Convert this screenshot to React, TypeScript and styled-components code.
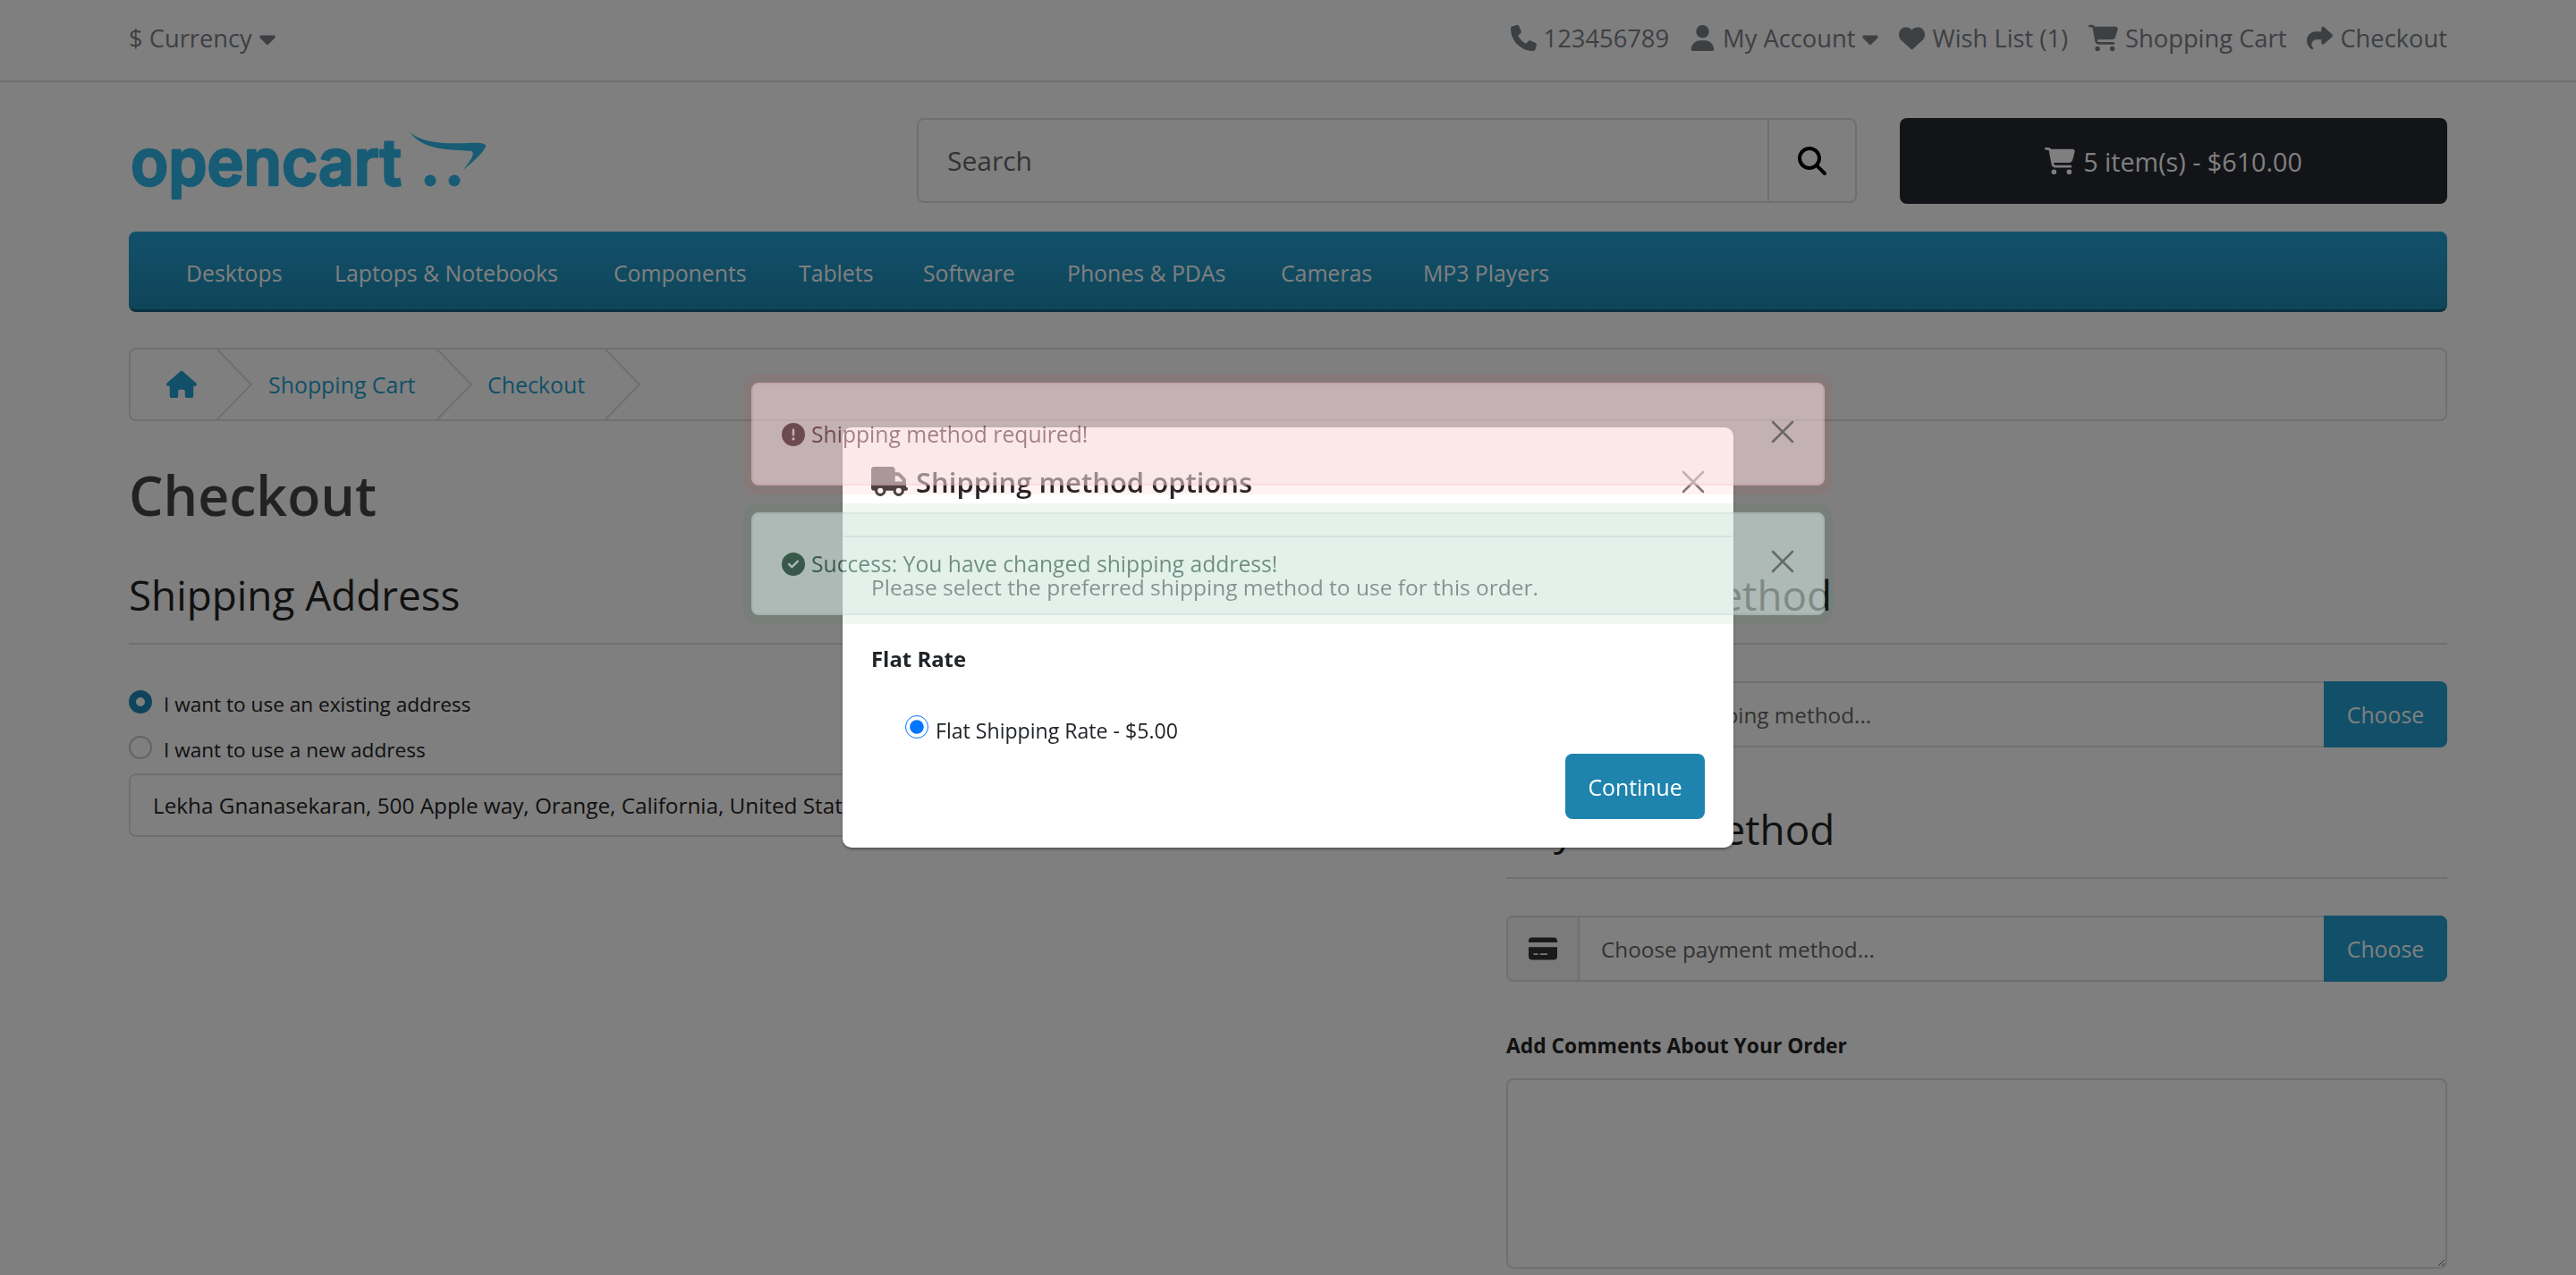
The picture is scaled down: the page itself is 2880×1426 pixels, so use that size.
import React from 'react';
import styled, { createGlobalStyle } from 'styled-components';
import {
  FaCaretDown,
  FaCartShopping,
  FaCircleCheck,
  FaCircleExclamation,
  FaCreditCard,
  FaHeart,
  FaHouse,
  FaMagnifyingGlass,
  FaPhone,
  FaShare,
  FaTruck,
  FaUser,
} from 'react-icons/fa6';

const GlobalStyle = createGlobalStyle`
  html, body {
    margin: 0;
    height: 1426px;
    overflow: hidden;
    background: #fff;
    font-family: "Open Sans", "Noto Sans", sans-serif;
    color: #222;
  }
  * { box-sizing: border-box; }
`;

// page under the backdrop
const TopBar = styled.nav`
  height: 92px;
  padding: 0 144px 5px;
  border-bottom: 2px solid #dedede;
  display: flex;
  align-items: center;
  justify-content: space-between;
  font-size: 27.3px;
  color: #7b8087;
`;

const TopGroup = styled.div`
  display: flex;
  align-items: center;
  gap: 23px;
`;

const TopLink = styled.span`
  display: flex;
  align-items: center;
  gap: 8px;
  white-space: nowrap;
  svg { font-size: 29px; }
  svg.wide { font-size: 33px; }
  svg.caret { font-size: 28px; margin: 0 -5px; }
`;

const Main = styled.div`
  padding: 40px 144px 0;
`;

const HeaderRow = styled.header`
  display: flex;
  align-items: flex-start;
  height: 96px;
`;

const LogoWrap = styled.div`
  flex: 1;
  padding-top: 15px;
  svg { display: block; overflow: visible; }
`;

const SearchBox = styled.div`
  width: 1051px;
  height: 95px;
  margin-right: 48px;
  border: 2px solid #dedede;
  border-radius: 8px;
  display: flex;
  align-items: stretch;
`;

const SearchText = styled.div`
  flex: 1;
  padding-left: 32px;
  display: flex;
  align-items: center;
  font-size: 30px;
  color: #666;
`;

const SearchButton = styled.div`
  width: 98px;
  border-left: 2px solid #dedede;
  display: flex;
  align-items: center;
  justify-content: center;
  font-size: 32px;
  color: #000;
`;

const CartButton = styled.div`
  width: 612px;
  height: 96px;
  border-radius: 8px;
  background: #26282e;
  color: #fff;
  display: flex;
  align-items: center;
  justify-content: center;
  gap: 9px;
  font-size: 28.7px;
  svg { font-size: 34px; }
`;

const MenuBar = styled.div`
  margin-top: 31px;
  height: 90px;
  padding: 4px 0 0 64px;
  border-radius: 8px;
  border-bottom: 3px solid #14607f;
  background: linear-gradient(#24a2d6, #1e8ab2);
  display: flex;
  align-items: center;
  gap: 60px;
  color: #fff;
  font-size: 24.8px;
`;

const MenuItem = styled.span<{ $width: number }>`
  width: ${(p) => p.$width}px;
  white-space: nowrap;
`;

const Breadcrumb = styled.div`
  margin-top: 40px;
  height: 82px;
  border: 2px solid #dedede;
  border-radius: 8px;
  display: flex;
  align-items: stretch;
  overflow: hidden;
  font-size: 24.9px;
  color: #23a1d1;
`;

const Crumb = styled.div<{ $width: number; $pad: number }>`
  position: relative;
  width: ${(p) => p.$width}px;
  padding-left: ${(p) => p.$pad}px;
  display: flex;
  align-items: center;
  white-space: nowrap;
`;

const Chevron = styled.svg`
  position: absolute;
  right: -42px;
  top: -2px;
  width: 42px;
  height: 82px;
`;

const PageTitle = styled.h1`
  margin: 44px 0 0;
  height: 77px;
  line-height: 77px;
  font-size: 60.8px;
  font-weight: 600;
  color: #444;
`;

const Columns = styled.div`
  margin-top: 44px;
  display: grid;
  grid-template-columns: 1492px 1052px;
  gap: 48px;
`;

const SectionTitle = styled.h2`
  margin: 0;
  height: 85px;
  line-height: 58px;
  border-bottom: 2px solid #dedede;
  font-size: 45.8px;
  font-weight: 400;
  color: #222;
`;

const RadioRow = styled.div<{ $first?: boolean }>`
  margin-top: ${(p) => (p.$first ? 48 : 15)}px;
  height: 36px;
  display: flex;
  align-items: center;
  gap: 13px;
  font-size: 22.6px;
  color: #222;
`;

const Dot = styled.span<{ $on?: boolean }>`
  width: 26px;
  height: 26px;
  margin-top: -5px;
  border-radius: 50%;
  border: ${(p) => (p.$on ? '8px solid #1f8ab8' : '2px solid #c4c4c4')};
  background: #fff;
`;

const SelectBox = styled.div`
  margin-top: 9px;
  height: 71px;
  padding-left: 25px;
  border: 2px solid #dedede;
  border-radius: 8px;
  display: flex;
  align-items: center;
  font-size: 24.3px;
  white-space: nowrap;
  overflow: hidden;
`;

const InputGroup = styled.div`
  margin-top: 41px;
  height: 74px;
  border: 2px solid #dedede;
  border-radius: 8px;
  display: flex;
  align-items: stretch;
`;

const Addon = styled.div`
  width: 80px;
  border-right: 2px solid #dedede;
  background: #f6f6f6;
  border-radius: 6px 0 0 6px;
  display: flex;
  align-items: center;
  justify-content: center;
  font-size: 32px;
  color: #333;
`;

const GroupText = styled.div`
  flex: 1;
  padding-left: 24px;
  display: flex;
  align-items: center;
  font-size: 24.3px;
  color: #666;
`;

const ChooseButton = styled.div`
  width: 138px;
  margin: -2px -2px -2px 0;
  border-radius: 0 8px 8px 0;
  background: #23a1d1;
  color: #fff;
  display: flex;
  align-items: center;
  justify-content: center;
  font-size: 24.8px;
`;

const PaymentTitle = styled(SectionTitle)`
  margin-top: 62px;
`;

const FieldLabel = styled.div`
  margin-top: 54px;
  height: 36px;
  line-height: 36px;
  font-size: 22.8px;
  font-weight: 700;
  color: #222;
`;

const Comments = styled.textarea`
  display: block;
  width: 100%;
  height: 213px;
  margin-top: 18px;
  border: 2px solid #dedede;
  border-radius: 8px;
  background: #fff;
`;

const Backdrop = styled.div`
  position: fixed;
  inset: 0;
  z-index: 10;
  background: rgba(0, 0, 0, 0.5);
`;

// dialog
const Modal = styled.div`
  position: fixed;
  top: 478px;
  left: 942px;
  z-index: 20;
  width: 996px;
  height: 470px;
  border-radius: 10px;
  background: #fff;
  box-shadow: 0 2px 3px rgba(0, 0, 0, 0.35);
`;

const ModalHeader = styled.div`
  height: 123px;
  padding: 0 32px;
  border-bottom: 2px solid #dee2e6;
  display: flex;
  align-items: center;
`;

const ModalTitle = styled.h5`
  margin: 0;
  flex: 1;
  font-size: 31px;
  font-weight: 600;
  color: #212529;
  display: flex;
  align-items: center;
  gap: 9px;
  svg { font-size: 41px; color: #444; }
`;

const CloseIcon = styled.svg<{ $dim: number }>`
  width: 26px;
  height: 26px;
  stroke: #000;
  stroke-width: 2.6;
  stroke-linecap: round;
  opacity: ${(p) => p.$dim};
`;

const ModalBody = styled.div`
  padding: 38px 32px 0;
`;

const Description = styled.div`
  height: 36px;
  line-height: 36px;
  font-size: 24.5px;
  color: #212529;
`;

const MethodName = styled.div`
  margin-top: 44px;
  height: 36px;
  line-height: 36px;
  font-size: 23.9px;
  font-weight: 700;
  color: #212529;
`;

const MethodOption = styled.label`
  margin: 44px 0 0 38px;
  height: 36px;
  display: flex;
  align-items: center;
  gap: 8px;
  font-size: 23.1px;
  color: #212529;
  input {
    width: 26px;
    height: 26px;
    margin: -8px 0 0;
  }
`;

const ModalActions = styled.div`
  margin-top: 8px;
  display: flex;
  justify-content: flex-end;
`;

const ContinueButton = styled.button`
  width: 156px;
  height: 73px;
  padding: 0;
  border: 0;
  border-radius: 8px;
  background: #1f84ad;
  color: #fff;
  font-family: inherit;
  font-size: 24.8px;
`;

// alerts float above the dialog, still fading in
const AlertStack = styled.div`
  position: fixed;
  top: 428px;
  left: 840px;
  z-index: 30;
  width: 1200px;
  display: flex;
  flex-direction: column;
  gap: 30px;
  opacity: 0.57;
`;

const Alert = styled.div<{ $kind: 'danger' | 'success' }>`
  position: relative;
  height: 115px;
  padding: 0 32px;
  border-radius: 8px;
  border: 2px solid ${(p) => (p.$kind === 'danger' ? '#f5c2c7' : '#badbcc')};
  background: ${(p) => (p.$kind === 'danger' ? '#f8d7da' : '#d1e7dd')};
  color: ${(p) => (p.$kind === 'danger' ? '#602328' : '#023b25')};
  box-shadow: 0 0 0 10px ${(p) => (p.$kind === 'danger' ? 'rgba(255, 0, 0, 0.09)' : 'rgba(0, 128, 60, 0.11)')};
  display: flex;
  align-items: center;
  gap: 7px;
  font-size: 24.7px;
  svg.status { font-size: 26px; }
`;

const AlertClose = styled.div`
  position: absolute;
  top: 40px;
  right: 32px;
  display: flex;
`;

const crumbChevron = (
  <Chevron viewBox="0 0 42 82" fill="none" stroke="#dedede" strokeWidth="2">
    <path d="M0 0 L40 41 L0 82" />
  </Chevron>
);

const closeX = (dim: number) => (
  <CloseIcon viewBox="0 0 26 26" $dim={dim}>
    <path d="M2 2 L24 24 M24 2 L2 24" />
  </CloseIcon>
);

const Logo = () => (
  <svg width="402" height="77" viewBox="0 0 402 77">
    <text
      x="2"
      y="60"
      fontFamily="Inter"
      fontWeight="600"
      fontSize="72"
      textLength="303"
      lengthAdjust="spacingAndGlyphs"
      fill="#2fb8e8"
      stroke="#2fb8e8"
      strokeWidth="2.5"
      strokeLinejoin="round"
    >
      opencart
    </text>
    <path
      fill="#2fb8e8"
      d="M314 0 C326 13 352 14 380 13 C392 12 400 13 399 17 C396 24 384 35 374 43 C382 32 388 24 383 22 C360 20 328 22 314 0Z"
    />
    <circle cx="337" cy="55" r="6.5" fill="#2fb8e8" />
    <circle cx="364" cy="55" r="6.5" fill="#2fb8e8" />
  </svg>
);

const menuItems = [
  { label: 'Desktops', width: 106 },
  { label: 'Laptops & Notebooks', width: 252 },
  { label: 'Components', width: 147 },
  { label: 'Tablets', width: 79 },
  { label: 'Software', width: 101 },
  { label: 'Phones & PDAs', width: 179 },
  { label: 'Cameras', width: 99 },
  { label: 'MP3 Players', width: 139 },
];

export default function App() {
  return (
    <>
      <GlobalStyle />
      <TopBar>
        <TopLink>$ Currency <FaCaretDown className="caret" /></TopLink>
        <TopGroup>
          <TopLink><FaPhone /> 123456789</TopLink>
          <TopLink><FaUser /> My Account <FaCaretDown className="caret" /></TopLink>
          <TopLink><FaHeart /> Wish List (1)</TopLink>
          <TopLink><FaCartShopping className="wide" /> Shopping Cart</TopLink>
          <TopLink><FaShare /> Checkout</TopLink>
        </TopGroup>
      </TopBar>
      <Main>
        <HeaderRow>
          <LogoWrap><Logo /></LogoWrap>
          <SearchBox>
            <SearchText>Search</SearchText>
            <SearchButton><FaMagnifyingGlass /></SearchButton>
          </SearchBox>
          <CartButton><FaCartShopping /> 5 item(s) - $610.00</CartButton>
        </HeaderRow>
        <MenuBar>
          {menuItems.map((item) => (
            <MenuItem key={item.label} $width={item.width}>{item.label}</MenuItem>
          ))}
        </MenuBar>
        <Breadcrumb>
          <Crumb $width={95} $pad={40}><FaHouse size={34} />{crumbChevron}</Crumb>
          <Crumb $width={246} $pad={59}>Shopping Cart{crumbChevron}</Crumb>
          <Crumb $width={188} $pad={58}>Checkout{crumbChevron}</Crumb>
        </Breadcrumb>
        <PageTitle>Checkout</PageTitle>
        <Columns>
          <div>
            <SectionTitle>Shipping Address</SectionTitle>
            <RadioRow $first><Dot $on /> I want to use an existing address</RadioRow>
            <RadioRow><Dot /> I want to use a new address</RadioRow>
            <SelectBox>Lekha Gnanasekaran, 500 Apple way, Orange, California, United States</SelectBox>
          </div>
          <div>
            <SectionTitle>Shipping Method</SectionTitle>
            <InputGroup>
              <Addon><FaTruck /></Addon>
              <GroupText>Choose shipping method...</GroupText>
              <ChooseButton>Choose</ChooseButton>
            </InputGroup>
            <PaymentTitle>Payment Method</PaymentTitle>
            <InputGroup>
              <Addon><FaCreditCard /></Addon>
              <GroupText>Choose payment method...</GroupText>
              <ChooseButton>Choose</ChooseButton>
            </InputGroup>
            <FieldLabel>Add Comments About Your Order</FieldLabel>
            <Comments />
          </div>
        </Columns>
      </Main>

      <Backdrop />

      <Modal>
        <ModalHeader>
          <ModalTitle><FaTruck /> Shipping method options</ModalTitle>
          {closeX(0.5)}
        </ModalHeader>
        <ModalBody>
          <Description>Please select the preferred shipping method to use for this order.</Description>
          <MethodName>Flat Rate</MethodName>
          <MethodOption>
            <input type="radio" name="shipping" defaultChecked /> Flat Shipping Rate - $5.00
          </MethodOption>
          <ModalActions>
            <ContinueButton>Continue</ContinueButton>
          </ModalActions>
        </ModalBody>
      </Modal>

      <AlertStack>
        <Alert $kind="danger">
          <FaCircleExclamation className="status" /> Shipping method required!
          <AlertClose>{closeX(0.6)}</AlertClose>
        </Alert>
        <Alert $kind="success">
          <FaCircleCheck className="status" /> Success: You have changed shipping address!
          <AlertClose>{closeX(0.6)}</AlertClose>
        </Alert>
      </AlertStack>
    </>
  );
}
